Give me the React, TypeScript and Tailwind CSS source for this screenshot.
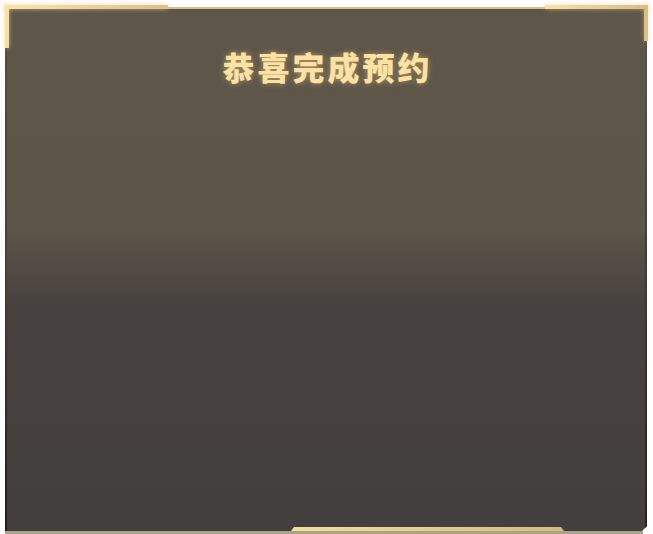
export default function App() {
  return (
    <div className="relative w-[653px] h-[534px] bg-white overflow-hidden pt-[5px] pl-[5px] flex flex-col">
      {/* top border row */}
      <div className="relative z-10 flex items-start w-[643px] h-[4px]">
        <div className="w-[163px] h-[4px] bg-[linear-gradient(90deg,#f6e7a6,#d9c385)] shadow-[0_0_5px_rgba(255,190,150,0.7)]" />
        <div className="flex-1 h-[2px] mt-[2px] bg-[#d5c188]" />
        <div className="w-[103px] h-[4px] bg-[linear-gradient(90deg,#f3e4a3,#d6bf80)] shadow-[0_0_5px_rgba(255,190,150,0.6)]" />
        {/* corner verticals */}
        <div className="absolute left-0 top-0 w-[4px] h-[43px] bg-[linear-gradient(180deg,#f6e7a6,#f2df9c)] shadow-[0_0_5px_rgba(255,190,150,0.7)]" />
        <div className="absolute right-0 top-0 w-[4px] h-[36px] bg-[linear-gradient(180deg,#d6bf80,#d9c486)] shadow-[0_0_5px_rgba(255,190,150,0.5)]" />
      </div>

      {/* panel */}
      <div className="relative w-[642px] h-[522px] bg-[linear-gradient(180deg,#5d5649_0%,#5c5548_42%,#47423f_57%,#433f3e_100%)] [clip-path:polygon(0_34px,4px_30px,4px_0,100%_0,100%_calc(100%-5px),calc(100%-5px)_100%,0_100%)]">
        <div className="absolute left-0 top-0 bottom-0 w-[2px] bg-[linear-gradient(180deg,#5a4a40_0%,#4b3c36_50%,#221d1b_100%)]" />
        <div className="absolute right-0 top-0 bottom-0 w-[2px] bg-[linear-gradient(180deg,#5c5548_0%,#3a3533_60%,#262220_100%)]" />
        <div className="flex justify-center pt-[38px]">
          <h1 className="text-[32px] leading-[38px] font-black tracking-[3px] pl-[3px] text-[#fbe2a4] [font-family:'Noto_Sans_CJK_SC','Noto_Sans',sans-serif] [text-shadow:0_0_6px_rgba(255,200,120,0.55)]">
            恭喜完成预约
          </h1>
        </div>
        {/* bottom gold bar */}
        <div className="absolute left-[286px] bottom-0 w-[273px] h-[4px] bg-[linear-gradient(90deg,#f1df9e,#d3bd7d)] [clip-path:polygon(3px_0,calc(100%-3px)_0,100%_100%,0_100%)]" />
      </div>

      {/* bottom line */}
      <div className="w-[638px] h-[3px] bg-[#aaa388]" />
    </div>
  )
}
